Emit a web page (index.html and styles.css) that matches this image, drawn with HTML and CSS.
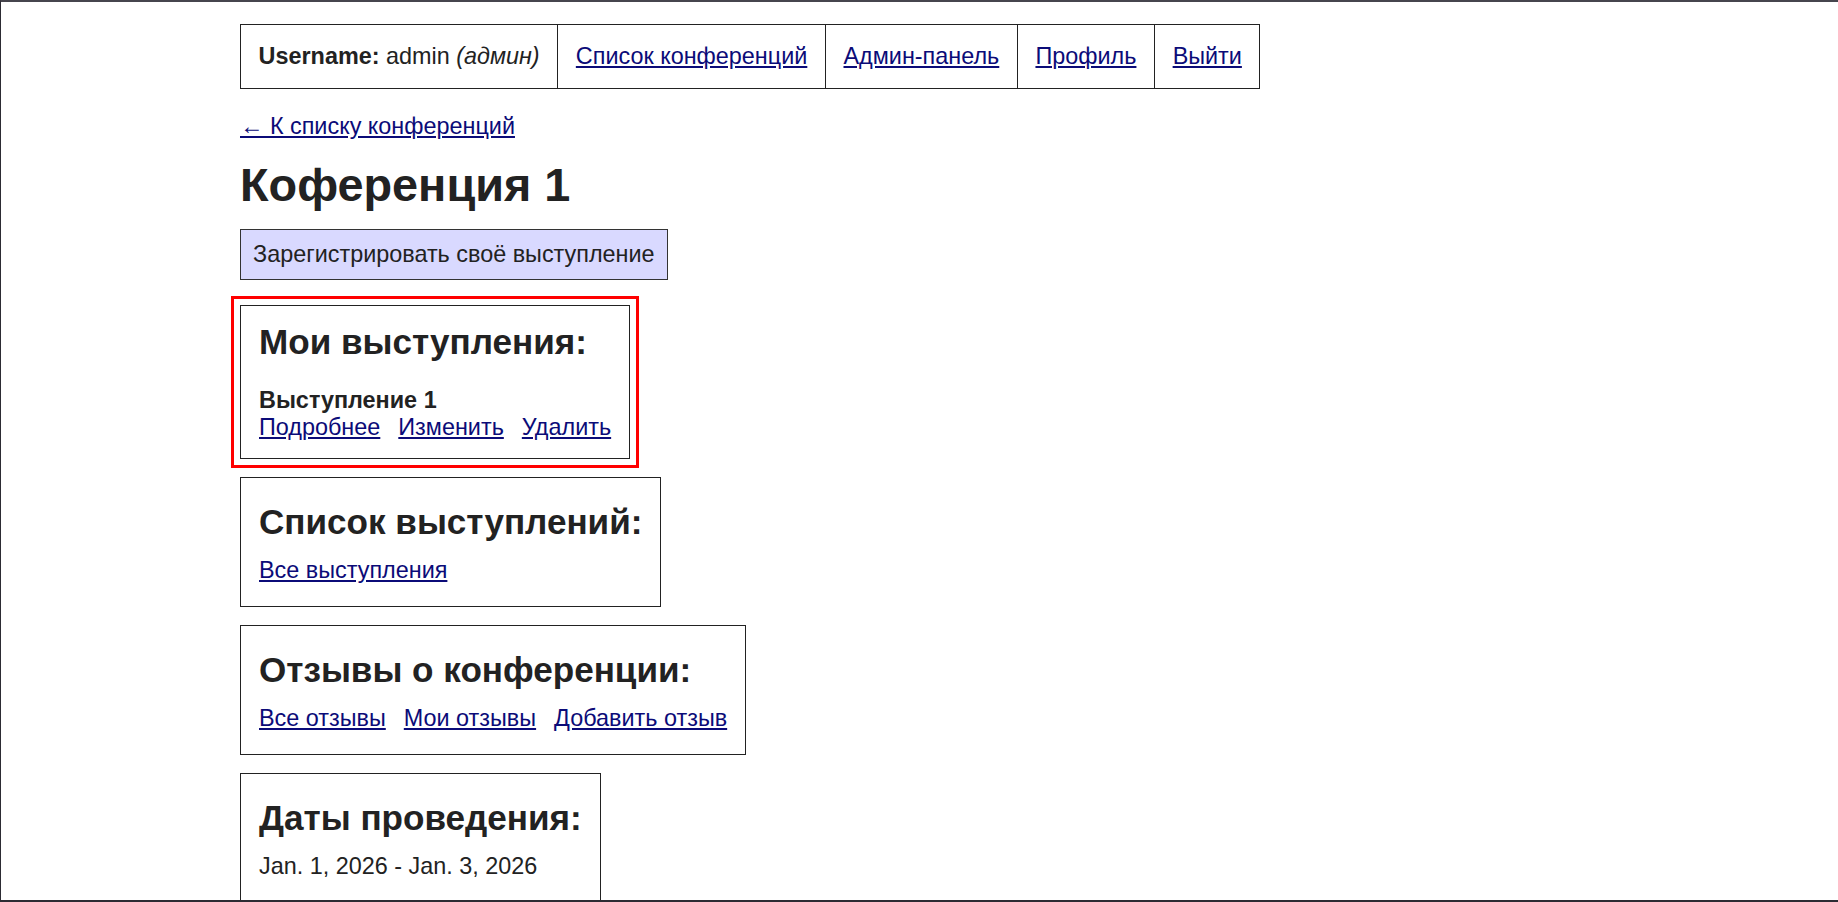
FILE: index.html
```html
<!DOCTYPE html>
<html lang="ru">
<head>
<meta charset="utf-8">
<title>Коференция 1</title>
<link rel="stylesheet" href="styles.css">
</head>
<body>
<div class="frame"></div>
<main class="page">
  <table class="nav">
    <tr>
      <td><b>Username:</b> admin <i>(админ)</i></td>
      <td><a href="#">Список конференций</a></td>
      <td><a href="#">Админ-панель</a></td>
      <td><a href="#">Профиль</a></td>
      <td><a href="#">Выйти</a></td>
    </tr>
  </table>

  <a class="back" href="#">← К списку конференций</a>

  <h1 class="title">Коференция 1</h1>

  <button class="register" type="button">Зарегистрировать своё выступление</button>

  <section class="card card-mine">
    <h2 class="card-title">Мои выступления:</h2>
    <div class="talk-name">Выступление 1</div>
    <div class="links">
      <a href="#">Подробнее</a>
      <a href="#">Изменить</a>
      <a href="#">Удалить</a>
    </div>
  </section>

  <section class="card">
    <h2 class="card-title">Список выступлений:</h2>
    <div class="links">
      <a href="#">Все выступления</a>
    </div>
  </section>

  <section class="card">
    <h2 class="card-title">Отзывы о конференции:</h2>
    <div class="links">
      <a href="#">Все отзывы</a>
      <a href="#">Мои отзывы</a>
      <a href="#">Добавить отзыв</a>
    </div>
  </section>

  <section class="card">
    <h2 class="card-title">Даты проведения:</h2>
    <div class="dates">Jan. 1, 2026 - Jan. 3, 2026</div>
  </section>
</main>
</body>
</html>
```

FILE: styles.css
```css
html, body {
  margin: 0;
  padding: 0;
  background: #ffffff;
}

body {
  font-family: "Liberation Sans", Arial, sans-serif;
  font-size: 23.4px;
  color: #222222;
}

.frame {
  position: fixed;
  inset: 0;
  border-top: 2px solid #46454d;
  border-left: 1px solid #2c2b33;
  border-bottom: 2px solid #2c2b33;
  pointer-events: none;
  z-index: 10;
}

.page {
  padding: 24px 0 0 240px;
  display: flex;
  flex-direction: column;
  align-items: flex-start;
}

a {
  color: #0b0b78;
  text-decoration: underline;
}

.nav {
  border-collapse: collapse;
  border: 1px solid #222222;
  font-size: 23.4px;
}

.nav td {
  border: 1px solid #222222;
  padding: 18px 17.6px;
  white-space: nowrap;
}

.back {
  margin-top: 24px;
}

.title {
  font-size: 46.8px;
  font-weight: bold;
  margin: 18px 0 17px;
  line-height: normal;
}

.register {
  font-family: inherit;
  font-size: 23.4px;
  color: #222222;
  background: #d9d9ff;
  border: 1px solid #333333;
  padding: 11px 12px;
  margin: 0 0 25px;
  border-radius: 0;
}

.card {
  border: 1px solid #222222;
  padding: 23.5px 18px 22.5px;
  margin-bottom: 18px;
}

.card-title {
  font-size: 35.1px;
  font-weight: bold;
  margin: 0 0 15px;
  line-height: normal;
}

.card-mine {
  padding: 16px 18px 17px;
  outline: 3px solid #ff0000;
  outline-offset: 6px;
}

.card-mine .card-title {
  margin-bottom: 25px;
}

.talk-name {
  font-weight: bold;
}

.links {
  display: flex;
  gap: 18px;
}
```
